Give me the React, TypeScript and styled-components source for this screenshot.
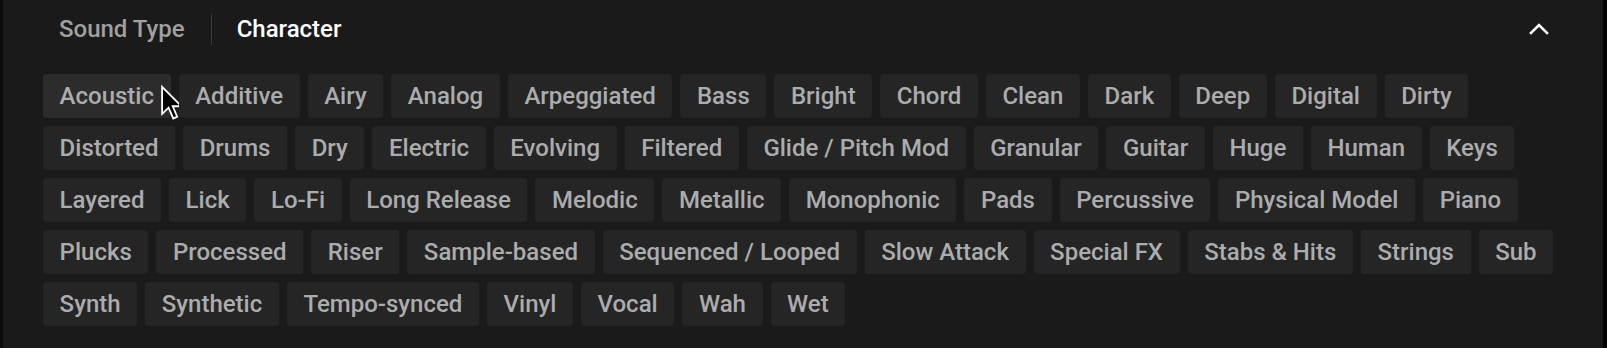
import React from "react";
import styled, { createGlobalStyle } from "styled-components";

const GlobalStyle = createGlobalStyle`
  html, body {
    margin: 0;
    padding: 0;
    background: #000000;
  }
  body {
    font-family: Roboto, "Noto Sans", "Liberation Sans", sans-serif;
    -webkit-font-smoothing: antialiased;
  }
`;

const Page = styled.div`
  display: flex;
  width: 1607px;
  height: 348px;
  background: #000000;
`;

const LeftEdge = styled.div`
  width: 3px;
  background: #0c0c0c;
  flex: none;
`;

const Panel = styled.section`
  width: 1600px;
  height: 348px;
  box-sizing: border-box;
  background: #1a1a1a;
  padding: 0 40px 22px 40px;
  display: flex;
  flex-direction: column;
`;

const Header = styled.div`
  height: 58px;
  display: flex;
  align-items: center;
`;

const Tab = styled.button<{ $active?: boolean }>`
  appearance: none;
  background: transparent;
  border: none;
  padding: 0 16px;
  height: 44px;
  font-family: Roboto, "Liberation Sans", sans-serif;
  font-size: 24px;
  font-weight: 500;
  color: ${(p) => (p.$active ? "#ffffff" : "#a0a0a0")};
  cursor: pointer;
`;

const Divider = styled.span`
  width: 1px;
  height: 31px;
  background: #3a3a3a;
  margin: 0 9px 0 10px;
`;

const Spacer = styled.div`
  flex: 1;
`;

const CollapseButton = styled.button`
  appearance: none;
  background: transparent;
  border: none;
  width: 48px;
  height: 48px;
  display: flex;
  align-items: center;
  justify-content: center;
  padding: 0;
  cursor: pointer;
`;

const ChipList = styled.div`
  margin-top: 16px;
  display: flex;
  flex-wrap: wrap;
  gap: 8px;
`;

const ChipWrap = styled.div`
  position: relative;
`;

const Chip = styled.button<{ $hover?: boolean }>`
  appearance: none;
  border: none;
  height: 44px;
  padding: 0 16.6px;
  border-radius: 4px;
  background: ${(p) => (p.$hover ? "#2c2c2c" : "#252525")};
  color: #abacad;
  font-family: Roboto, "Liberation Sans", sans-serif;
  font-size: 24px;
  font-weight: 500;
  white-space: nowrap;
  cursor: pointer;
`;

const Cursor = styled.svg`
  position: absolute;
  left: 117px;
  top: 11px;
  pointer-events: none;
`;

const tags = [
  "Acoustic", "Additive", "Airy", "Analog", "Arpeggiated", "Bass", "Bright", "Chord", "Clean", "Dark", "Deep", "Digital", "Dirty",
  "Distorted", "Drums", "Dry", "Electric", "Evolving", "Filtered", "Glide / Pitch Mod", "Granular", "Guitar", "Huge", "Human", "Keys",
  "Layered", "Lick", "Lo-Fi", "Long Release", "Melodic", "Metallic", "Monophonic", "Pads", "Percussive", "Physical Model", "Piano",
  "Plucks", "Processed", "Riser", "Sample-based", "Sequenced / Looped", "Slow Attack", "Special FX", "Stabs & Hits", "Strings", "Sub",
  "Synth", "Synthetic", "Tempo-synced", "Vinyl", "Vocal", "Wah", "Wet",
];

export default function App() {
  return (
    <>
      <GlobalStyle />
      <Page>
        <LeftEdge />
        <Panel>
          <Header>
            <Tab>Sound Type</Tab>
            <Divider />
            <Tab $active>Character</Tab>
            <Spacer />
            <CollapseButton aria-label="Collapse">
              <svg width="20" height="12" viewBox="0 0 20 12" fill="none">
                <path d="M2 10 L10 2 L18 10" stroke="#ffffff" strokeWidth="2.6" strokeLinecap="square" strokeLinejoin="miter" />
              </svg>
            </CollapseButton>
          </Header>
          <ChipList>
            {tags.map((t, i) => (
              <ChipWrap key={t}>
                <Chip $hover={i === 0}>{t}</Chip>
                {i === 0 && (
                  <Cursor width="24" height="36" viewBox="0 0 13 20">
                    <path
                      d="M1 1 L1 16 L4.6 12.6 L7.2 18.6 L9.4 17.6 L6.9 11.8 L11.8 11.8 Z"
                      fill="#000000"
                      stroke="#ffffff"
                      strokeWidth="1"
                      strokeLinejoin="miter"
                    />
                  </Cursor>
                )}
              </ChipWrap>
            ))}
          </ChipList>
        </Panel>
      </Page>
    </>
  );
}
